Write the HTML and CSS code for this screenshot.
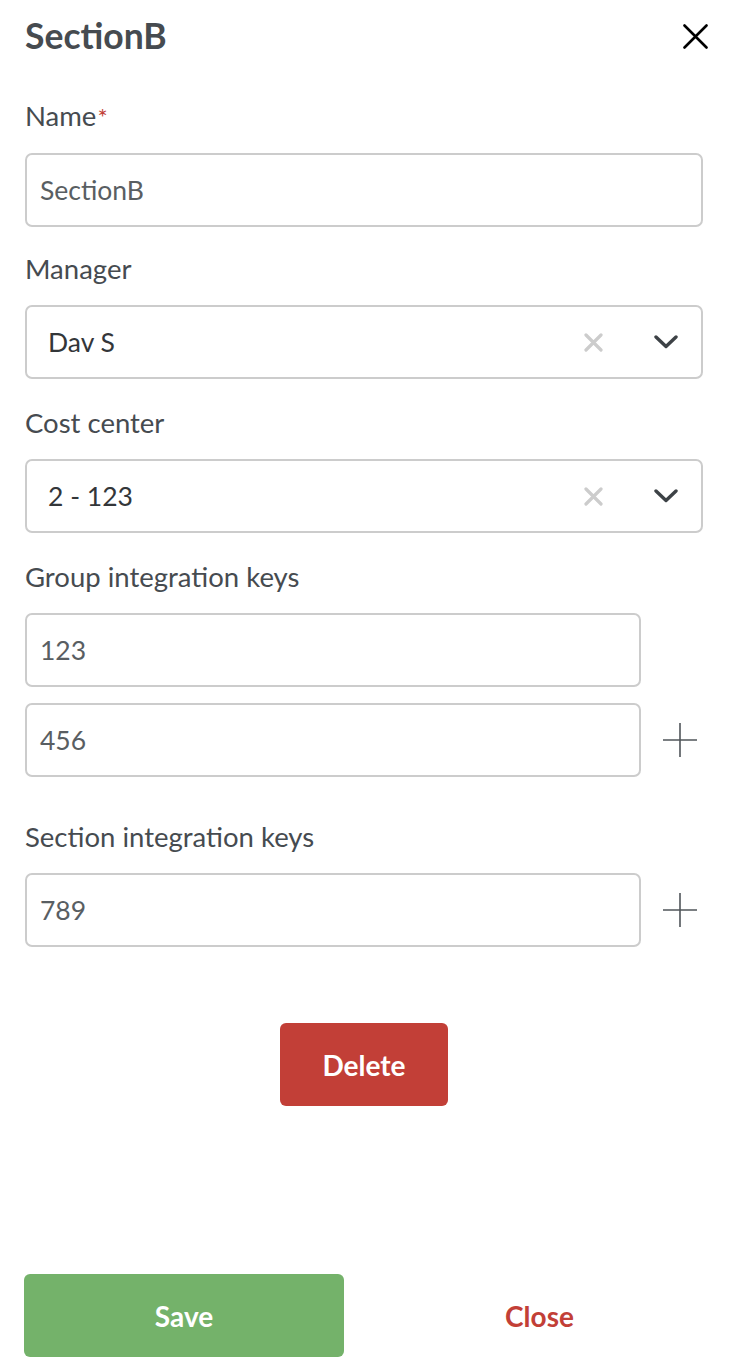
FILE: index.html
```html
<!DOCTYPE html>
<html lang="en">
<head>
<meta charset="utf-8">
<title>SectionB</title>
<link rel="stylesheet" href="styles.css">
</head>
<body>
<div class="panel">
  <header class="header">
    <h1 class="title">SectionB</h1>
    <button class="close-x" aria-label="Close">
      <svg width="25" height="25" viewBox="0 0 25 25"><path d="M1.5 1.5 L23.5 23.5 M23.5 1.5 L1.5 23.5" stroke="#000" stroke-width="2.6" stroke-linecap="round" fill="none"/></svg>
    </button>
  </header>

  <div class="field field-name">
    <label class="label">Name<span class="req">*</span></label>
    <div class="input">SectionB</div>
  </div>

  <div class="field">
    <label class="label">Manager</label>
    <div class="select">
      <span class="select-value">Dav S</span>
      <span class="clear"><svg width="19" height="19" viewBox="0 0 19 19"><path d="M2 2 L17 17 M17 2 L2 17" stroke="#cccccc" stroke-width="3.2" stroke-linecap="round" fill="none"/></svg></span>
      <span class="chev"><svg width="24" height="14" viewBox="0 0 24 14"><path d="M2 2 L12 11.5 L22 2" stroke="#3d4246" stroke-width="3.4" stroke-linecap="round" stroke-linejoin="round" fill="none"/></svg></span>
    </div>
  </div>

  <div class="field">
    <label class="label">Cost center</label>
    <div class="select">
      <span class="select-value">2 - 123</span>
      <span class="clear"><svg width="19" height="19" viewBox="0 0 19 19"><path d="M2 2 L17 17 M17 2 L2 17" stroke="#cccccc" stroke-width="3.2" stroke-linecap="round" fill="none"/></svg></span>
      <span class="chev"><svg width="24" height="14" viewBox="0 0 24 14"><path d="M2 2 L12 11.5 L22 2" stroke="#3d4246" stroke-width="3.4" stroke-linecap="round" stroke-linejoin="round" fill="none"/></svg></span>
    </div>
  </div>

  <div class="field field-group">
    <label class="label">Group integration keys</label>
    <div class="keys">
      <div class="key-row">
        <div class="input">123</div>
        <span class="plus-slot"></span>
      </div>
      <div class="key-row">
        <div class="input">456</div>
        <span class="plus-slot"><svg width="34" height="34" viewBox="0 0 34 34"><path d="M17 0 V34 M0 17 H34" stroke="#50555a" stroke-width="1.6" fill="none"/></svg></span>
      </div>
    </div>
  </div>

  <div class="field field-last">
    <label class="label">Section integration keys</label>
    <div class="keys">
      <div class="key-row">
        <div class="input">789</div>
        <span class="plus-slot"><svg width="34" height="34" viewBox="0 0 34 34"><path d="M17 0 V34 M0 17 H34" stroke="#50555a" stroke-width="1.6" fill="none"/></svg></span>
      </div>
    </div>
  </div>

  <div class="delete-row">
    <button class="btn-delete">Delete</button>
  </div>

  <footer class="footer">
    <button class="btn-save">Save</button>
    <button class="btn-close">Close</button>
  </footer>
</div>
</body>
</html>
```

FILE: styles.css
```css
* { box-sizing: border-box; }
html, body { margin: 0; padding: 0; background: #fff; }
body {
  font-family: "Lato", "Liberation Sans", sans-serif;
  color: #464b50;
}
.panel {
  min-height: 100vh;
  display: flex;
  flex-direction: column;
  padding: 16px 29px 5px 25px;
}
.header {
  display: flex;
  align-items: center;
  justify-content: space-between;
  height: 40px;
  margin-bottom: 45px;
}
.title {
  margin: 0;
  font-size: 35.5px;
  line-height: 40px;
  font-weight: 700;
  color: #464b50;
}
.close-x {
  border: 0;
  background: none;
  padding: 0;
  margin-right: -5px;
  display: flex;
}
.field {
  display: flex;
  flex-direction: column;
  margin-bottom: 29px;
}
.field-name { margin-bottom: 27px; }
.field-group { margin-bottom: 45px; }
.field-last { margin-bottom: 0; }
.keys { display: flex; flex-direction: column; gap: 16px; }
.label {
  font-size: 27.5px;
  line-height: 30px;
  margin-bottom: 21px;
  color: #464b50;
}
.req { color: #c23f37; font-size: 24px; margin-left: 1px; }
.input {
  height: 74px;
  border: 2px solid #cccccc;
  border-radius: 7px;
  display: flex;
  align-items: center;
  padding-left: 13px;
  font-size: 26.5px;
  color: #595e62;
}
.select {
  height: 74px;
  border: 2px solid #cccccc;
  border-radius: 7px;
  display: flex;
  align-items: center;
  padding: 0 23px 0 21px;
  font-size: 26.5px;
  color: #333639;
}
.select-value { flex: 1; }
.clear { display: flex; margin-right: 51px; }
.chev { display: flex; }
.key-row {
  display: flex;
  align-items: center;
}
.key-row .input { flex: 1; }
.plus-slot {
  width: 62px;
  display: flex;
  justify-content: flex-end;
  padding-right: 6px;
}
.delete-row {
  display: flex;
  justify-content: center;
  margin-top: 76px;
}
.btn-delete {
  width: 168px;
  height: 83px;
  border: 0;
  border-radius: 6px;
  background: #c23f37;
  color: #fff;
  font-family: inherit;
  font-size: 28px;
  font-weight: 700;
}
.footer {
  margin-top: auto;
  display: grid;
  grid-template-columns: 320px 1fr;
  gap: 32px;
  margin-left: -1px;
}
.btn-save {
  height: 83px;
  border: 0;
  border-radius: 6px;
  background: #74b26a;
  color: #fff;
  font-family: inherit;
  font-size: 28px;
  font-weight: 700;
}
.btn-close {
  height: 83px;
  border: 0;
  background: none;
  color: #c23f37;
  font-family: inherit;
  font-size: 28px;
  font-weight: 700;
}
```
